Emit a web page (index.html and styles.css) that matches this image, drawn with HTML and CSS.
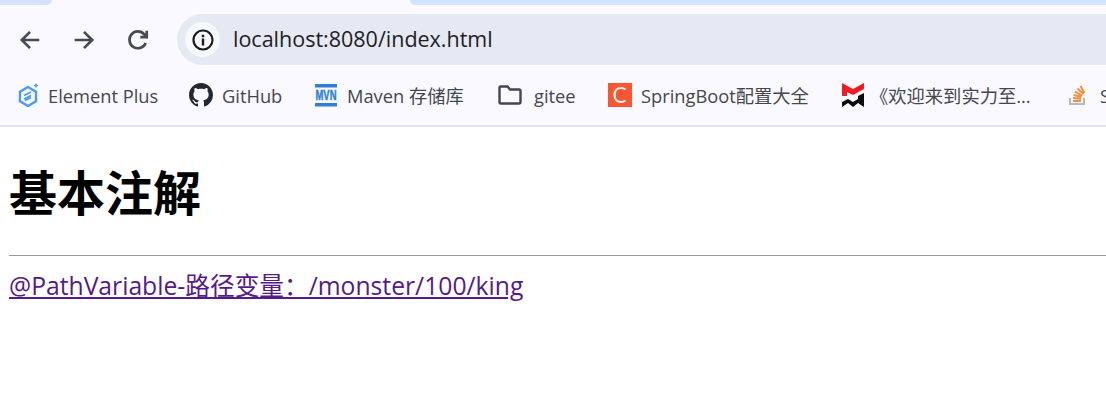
FILE: index.html
```html
<!DOCTYPE html>
<html lang="zh-CN">
<head>
    <meta charset="UTF-8">
    <meta name="viewport" content="width=device-width, initial-scale=1.0">
    <title>基本注解</title>
    <link rel="stylesheet" href="styles.css">
</head>
<body>
    <div class="chrome">
        <div class="tabstrip">
            <div class="strip-left"></div>
            <div class="strip-tab"></div>
            <div class="strip-right"></div>
        </div>

        <div class="toolbar">
            <svg class="nav-icon" viewBox="0 0 24 24"><path d="M20 12H5M12 5l-7 7 7 7"/></svg>
            <svg class="nav-icon" viewBox="0 0 24 24"><path d="M4 12h15M12 5l7 7-7 7"/></svg>
            <svg class="nav-icon" viewBox="0 0 24 24"><path d="M18.600 14.500a7.200 7.200 0 1 1-1.200-7.300L19.500 9.500M19.500 4v5.500H14"/></svg>
            <div class="omnibox">
                <span class="site-badge">
                    <svg viewBox="0 0 24 24" width="24" height="24"><circle cx="12" cy="12" r="9.500" fill="none" stroke="#1b1c20" stroke-width="2.200"/><rect x="10.800" y="10.500" width="2.400" height="7" fill="#1b1c20"/><rect x="10.800" y="6.800" width="2.400" height="2.400" fill="#1b1c20"/></svg>
                </span>
                <span class="url">localhost:8080/index.html</span>
            </div>
        </div>

        <div class="bookmarks">
            <a class="bookmark bm-element">
                <svg class="bm-icon" viewBox="0 0 24 24"><path d="M13 4l8 4.700v9.600L13 23l-8-4.700V8.700z" fill="none" stroke="#4c9bef" stroke-width="2.400"/><path d="M9 12.500l7-3.500M9 16l7-3.500M10 17.500l6-3" stroke="#4c9bef" stroke-width="1.800" fill="none"/><path d="M21 0l.8 1.800 1.800.8-1.800.8-.8 1.800-.8-1.800-1.800-.8 1.800-.8z" fill="#4c9bef"/></svg>
                <span>Element Plus</span>
            </a>
            <a class="bookmark bm-github">
                <svg class="bm-icon" viewBox="0 0 16 16"><path fill="#24292f" d="M8 0C3.580 0 0 3.580 0 8c0 3.540 2.290 6.530 5.470 7.590.4.070.55-.17.55-.38 0-.19-.01-.82-.01-1.490-2.010.37-2.530-.49-2.690-.94-.09-.23-.48-.94-.82-1.130-.28-.15-.68-.52-.01-.53.63-.01 1.080.58 1.230.82.720 1.210 1.870.87 2.330.66.070-.52.280-.87.510-1.070-1.780-.2-3.640-.89-3.640-3.950 0-.87.310-1.590.820-2.150-.08-.2-.36-1.020.080-2.120 0 0 .67-.21 2.200.82.640-.18 1.320-.27 2-.27s1.360.09 2 .27c1.530-1.040 2.200-.82 2.200-.82.440 1.100.160 1.920.080 2.120.510.560.820 1.270.820 2.150 0 3.070-1.870 3.750-3.650 3.950.290.250.540.730.540 1.480 0 1.070-.01 1.930-.01 2.200 0 .21.150.460.550.380A8.010 8.010 0 0 0 16 8c0-4.420-3.580-8-8-8z"/></svg>
                <span>GitHub</span>
            </a>
            <a class="bookmark bm-maven">
                <svg class="bm-icon" viewBox="0 0 22 24" preserveAspectRatio="xMinYMid meet">
                    <rect y="1" width="22" height="3.500" fill="#2f7fd8"/>
                    <rect y="20" width="22" height="3.500" fill="#2f7fd8"/>
                    <text class="mvn-mark" x="11" y="11" text-anchor="middle" transform="scale(1 1.550)">MVN</text>
                </svg>
                <span>Maven 存储库</span>
            </a>
            <a class="bookmark bm-folder">
                <svg class="bm-icon" viewBox="0 0 24 24"><path d="M1.500 5A1.500 1.500 0 0 1 3 3.500h6.500L12 6.500h9A1.500 1.500 0 0 1 22.500 8v11a1.500 1.500 0 0 1-1.500 1.500H3A1.500 1.500 0 0 1 1.500 19z" fill="none" stroke="#45474d" stroke-width="2.400"/></svg>
                <span>gitee</span>
            </a>
            <a class="bookmark bm-csdn">
                <svg class="bm-icon" viewBox="0 0 24 24"><rect width="24" height="24" fill="#fc5531"/><path d="M17.500 6.500A7 7 0 0 0 13 5C9 5 6.500 8 6.500 12s2.500 7 6.500 7a7 7 0 0 0 4.500-1.500" fill="none" stroke="#fff" stroke-width="2.200"/></svg>
                <span>SpringBoot配置大全</span>
            </a>
            <a class="bookmark bm-wm">
                <svg class="bm-icon wm-icon" viewBox="0 0 22 24"><path d="M0 0l11 6 11-6v6l-11 6-6-3v4H0z" fill="#ee1c25"/><path d="M22 10v14l-6-4-5 4-5-4-6 4v-5l6-3 5 3 5-3V13z" fill="#0a0a0a"/></svg>
                <span>《欢迎来到实力至...</span>
            </a>
            <a class="bookmark bm-so">
                <svg class="bm-icon" viewBox="0 0 20 24"><path d="M2 15v6h14v-6" fill="none" stroke="#b9b9bd" stroke-width="2"/><path d="M5 18h8M5 15l8 .8M5.500 12l8 2M7 8.700l7 4M9.500 5.500l6 5.500M12.500 3l4 7" fill="none" stroke="#f2903a" stroke-width="2"/></svg>
                <span>Stack Overflow</span>
            </a>
        </div>
    </div>

    <main class="content">
        <h1 class="title">基本注解</h1>
        <hr class="rule">
        <a class="demo-link" href="#">@PathVariable-路径变量：/monster/100/king</a>
    </main>
</body>
</html>
```

FILE: styles.css
```css
html, body {
    margin: 0;
    height: 100%;
    overflow: hidden;
}
body {
    background: #fff;
    color: #000;
    font-family: "Open Sans", "Noto Sans CJK SC", sans-serif;
}
.chrome {
    background: #f9f9ff;
    border-bottom: 2px solid #e0e2e8;
    height: 125px;
}
.tabstrip {
    display: flex;
    height: 5px;
}
.strip-left {
    width: 52px;
    background: #d3e3fd;
    border-bottom-right-radius: 5px;
}
.strip-tab {
    width: 358px;
}
.strip-right {
    flex: 1;
    background: #d3e3fd;
    border-bottom-left-radius: 5px;
}
.toolbar {
    display: flex;
    align-items: center;
    height: 51px;
    margin-top: 9px;
    padding-left: 16px;
}
.nav-icon {
    width: 28px;
    height: 28px;
    margin-right: 26px;
    fill: none;
    stroke: #474a52;
    stroke-width: 2.300;
}
.nav-icon:nth-child(3) {
    margin-right: 0;
}
.omnibox {
    flex: 1;
    display: flex;
    align-items: center;
    height: 51px;
    margin-left: 25px;
    padding-left: 8px;
    background: #e5e9f3;
    border-radius: 26px 0 0 26px;
}
.site-badge {
    display: flex;
    align-items: center;
    justify-content: center;
    width: 35px;
    height: 35px;
    border-radius: 50%;
    background: #f7f8fc;
}
.url {
    margin-left: 13px;
    margin-bottom: 2px;
    font-size: 21.500px;
    color: #1f2024;
    white-space: nowrap;
}
.bookmarks {
    display: flex;
    align-items: center;
    height: 60px;
    white-space: nowrap;
    overflow: hidden;
}
.bookmark {
    display: flex;
    align-items: center;
    flex: none;
    font-size: 18.300px;
    color: #45474d;
}
.bm-icon {
    flex: none;
    width: 24px;
    height: 24px;
    margin-right: 9px;
}
.mvn-mark {
    font-family: "Liberation Sans", sans-serif;
    font-size: 9.400px;
    font-weight: 700;
    fill: #2f7fd8;
    stroke: #2f7fd8;
    stroke-width: 0.300;
}
.bm-element { margin-left: 15px; width: 174px; }
.bm-github { width: 126px; }
.bm-maven { width: 183px; }
.bm-maven .bm-icon { margin-right: 8px; }
.bm-folder { width: 110px; }
.bm-folder .bm-icon { margin-right: 12px; }
.bm-csdn { width: 233px; }
.bm-wm { width: 225px; }
.bm-wm .bm-icon { margin-right: 5px; }
.bm-so .bm-icon { margin-right: 10px; }
.content {
    padding-left: 9px;
}
.title {
    margin: 38px 0 0;
    font-size: 48px;
    line-height: 56px;
    font-weight: 700;
}
.rule {
    margin: 34px 0 10px;
    border: 0;
    border-top: 1px solid #9a9a9a;
}
.demo-link {
    font-size: 24.700px;
    color: #551a8b;
}
```
